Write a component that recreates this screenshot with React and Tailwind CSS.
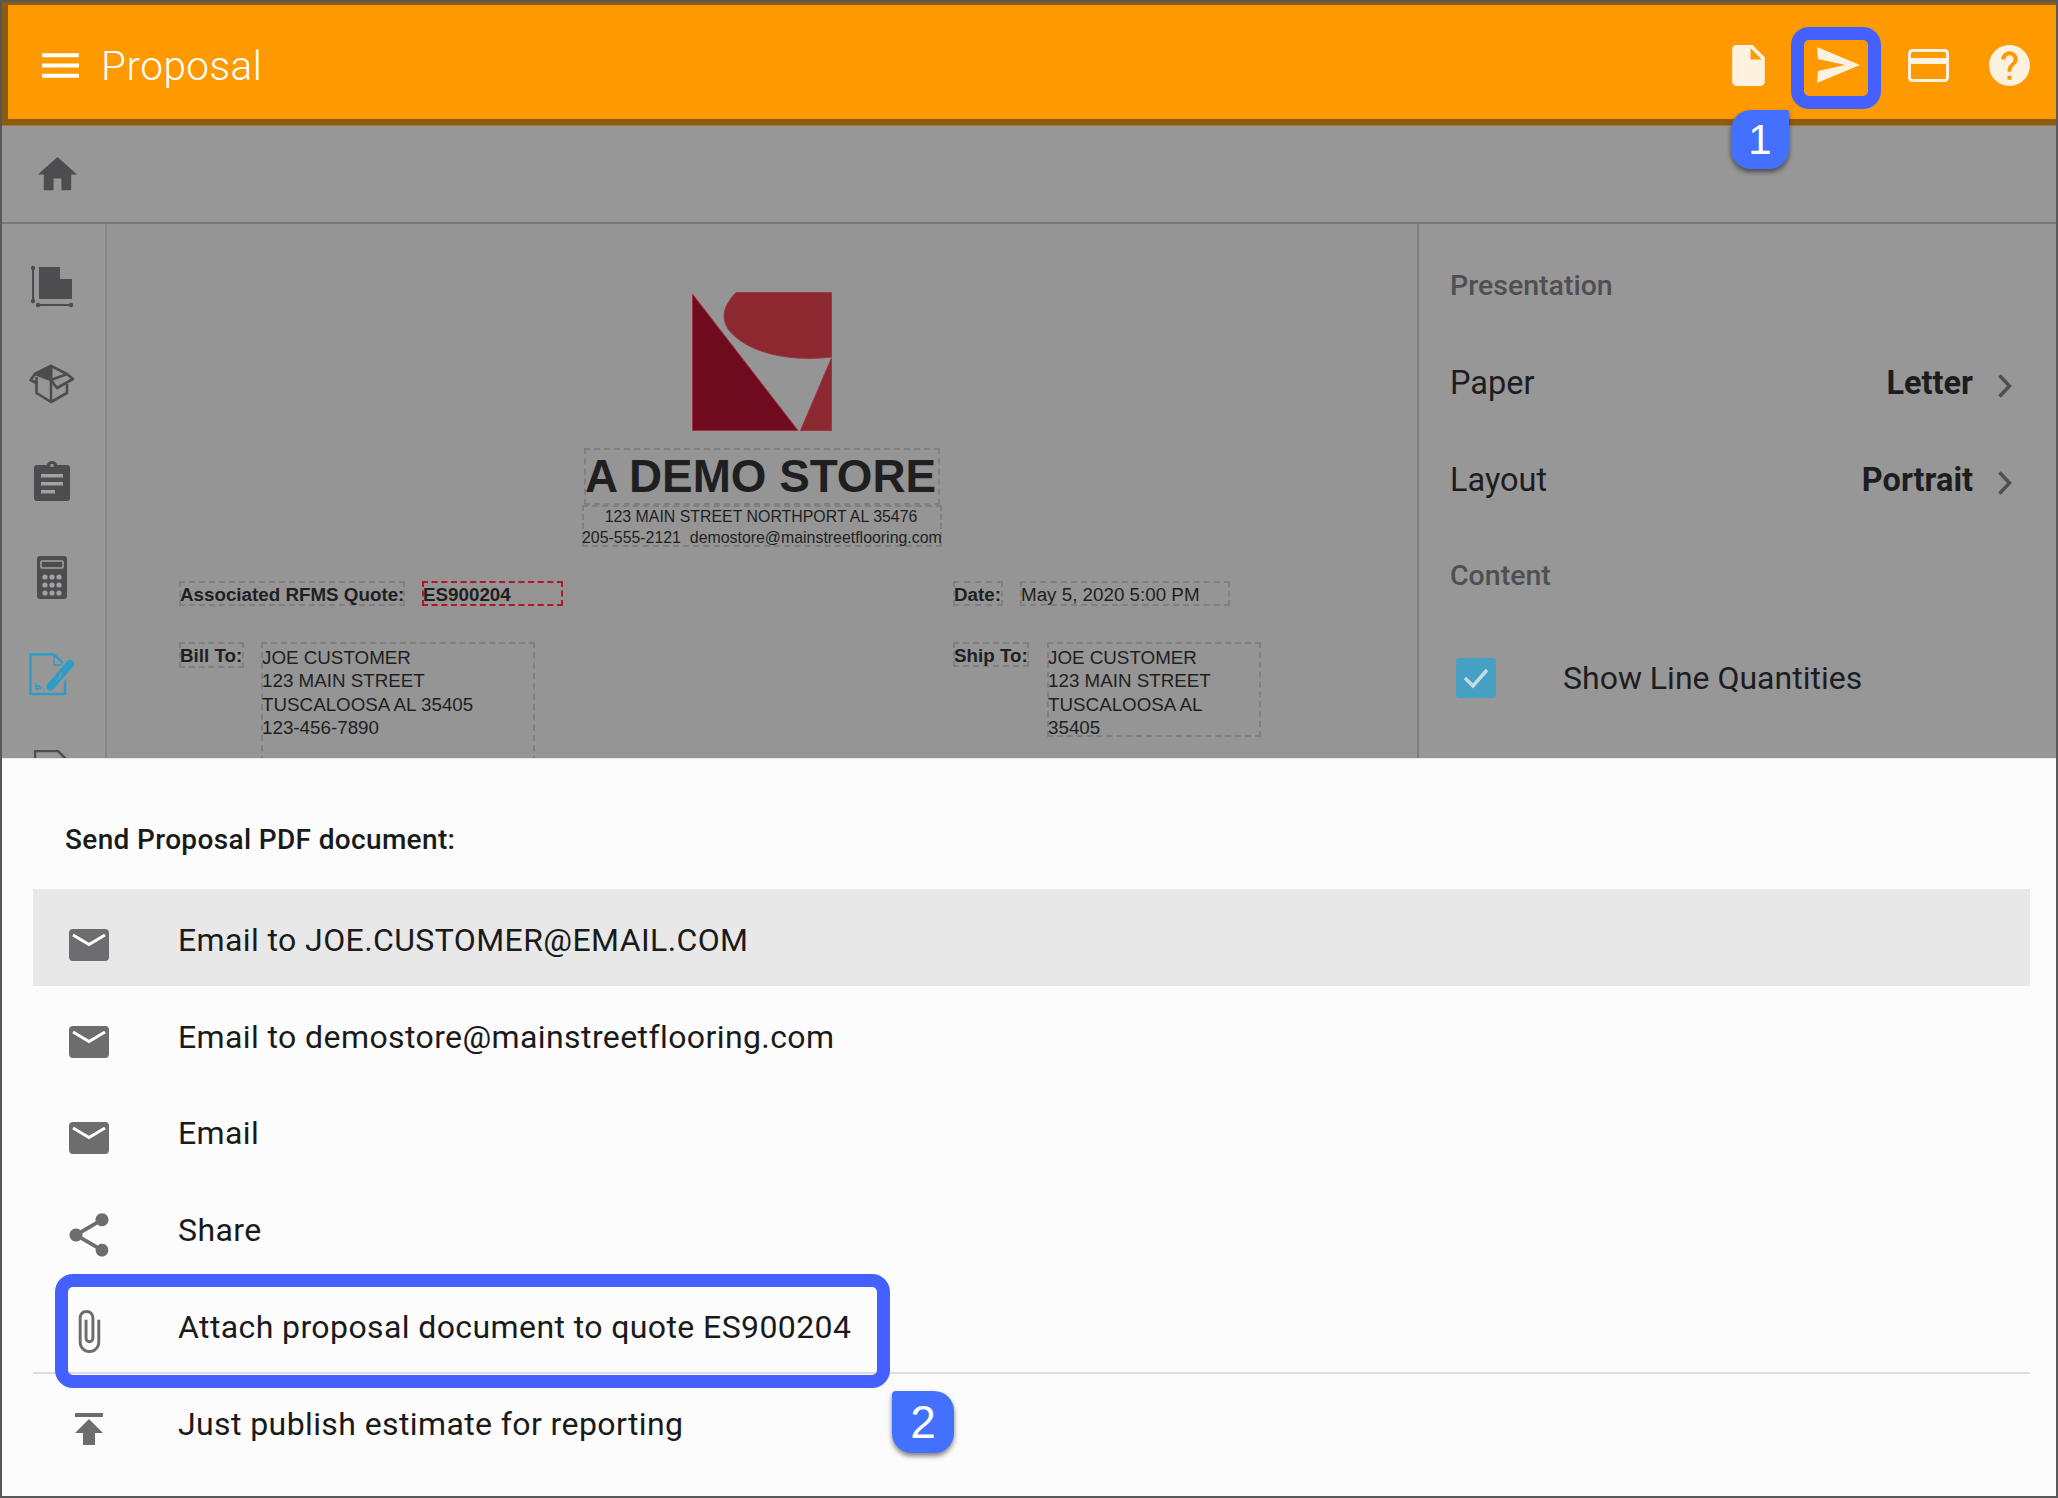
import { MdMenu, MdInsertDriveFile, MdHelp, MdHome, MdShare, MdAttachFile, MdPublish } from 'react-icons/md';

function SendIcon() {
  return (
    <svg width="43" height="36" viewBox="0 0 43 36" className="text-[#fdf1e0]">
      <polygon points="0,0 43,18 0,36 1,24 28,18 1,12" fill="currentColor" />
    </svg>
  );
}

function CardIcon() {
  return (
    <svg width="41" height="33" viewBox="0 0 41 33" className="text-[#fdf1e0]">
      <rect x="1.500" y="1.500" width="38" height="30" rx="3" fill="none" stroke="currentColor" strokeWidth="3" />
      <rect x="2" y="9" width="37" height="6" fill="currentColor" />
    </svg>
  );
}

function MailIcon() {
  return (
    <svg width="40" height="32" viewBox="0 0 40 32">
      <rect width="40" height="32" rx="4" fill="#6d6d6f" />
      <path d="M4 6 L20 15.500 L36 6" fill="none" stroke="#fff" strokeWidth="3" />
    </svg>
  );
}

function FloorIcon() {
  return (
    <svg width="44" height="44" viewBox="0 0 44 44" fill="#4d4d4f">
      <path d="M9 2 H30 V14 H42 V34 H9 Z" />
      <path d="M3 3 V36 M8 40 H41" stroke="#4d4d4f" strokeWidth="2" fill="none" />
      <circle cx="3" cy="3" r="2.200" />
      <circle cx="3" cy="36" r="2.200" />
      <circle cx="8" cy="40" r="2.200" />
      <circle cx="41" cy="40" r="2.200" />
    </svg>
  );
}

function BoxIcon() {
  return (
    <svg width="46" height="40" viewBox="0 0 46 40" fill="none" stroke="#4d4d4f" strokeWidth="2.600" strokeLinejoin="round">
      <path d="M22 2 L6 10 L1.500 16 L7.500 19 V29 L22 38 L38 29 V20" />
      <path d="M22 2 L38 10 L44 15 L28 24 L22 16 Z" />
      <path d="M22 2 L6 10 L22 16 Z" fill="#4d4d4f" />
      <path d="M22 16 V38 M7.500 13 V19 M22 16 L38 10" />
    </svg>
  );
}

function ClipboardIcon() {
  return (
    <svg width="36" height="40" viewBox="0 0 36 40">
      <path d="M3 4 H13 A5 4 0 0 1 23 4 H33 Q36 4 36 7 V37 Q36 40 33 40 H3 Q0 40 0 37 V7 Q0 4 3 4 Z" fill="#4d4d4f" />
      <rect x="16.500" y="3" width="3" height="3" fill="#979797" />
      <rect x="7" y="13" width="22" height="3.500" fill="#a2a2a2" />
      <rect x="7" y="21" width="22" height="3.500" fill="#a2a2a2" />
      <rect x="7" y="29" width="14" height="3.500" fill="#a2a2a2" />
    </svg>
  );
}

function CalculatorIcon() {
  const dots = [];
  for (const y of [21, 29, 37]) {
    for (const x of [8, 15, 22]) dots.push(<circle key={`${x}-${y}`} cx={x} cy={y} r="2.600" fill="#a2a2a2" />);
  }
  return (
    <svg width="30" height="43" viewBox="0 0 30 43">
      <rect width="30" height="43" rx="3" fill="#4d4d4f" />
      <rect x="4" y="5" width="22" height="7" rx="1" fill="none" stroke="#a2a2a2" strokeWidth="1.500" />
      {dots}
    </svg>
  );
}

function EditDocIcon() {
  return (
    <svg width="46" height="43" viewBox="0 0 46 43">
      <path d="M1.500 1.500 H25 L36 12 V41 H1.500 Z" fill="none" stroke="#2c9dc6" strokeWidth="2.400" />
      <path d="M25 2 V12 H35" fill="none" stroke="#2c9dc6" strokeWidth="1.400" />
      <path d="M22 33 L42 11" stroke="#979797" strokeWidth="13" strokeLinecap="round" />
      <path d="M21.500 33.500 L41 11" stroke="#2c9dc6" strokeWidth="8" strokeLinecap="round" />
      <path d="M29 27 L33 19" stroke="#979797" strokeWidth="1.200" />
      <path d="M7 36 V30 M7 36 H10 V33 H7 M12 36 V33 M15 36 H16" fill="none" stroke="#2c9dc6" strokeWidth="1.400" />
    </svg>
  );
}

function CutDocIcon() {
  return (
    <svg width="36" height="44" viewBox="0 0 36 44">
      <path d="M1 43 V1 H24 L35 12 V43" fill="none" stroke="#4d4d4f" strokeWidth="2.500" />
    </svg>
  );
}

function Logo() {
  return (
    <svg width="140" height="139" viewBox="0 0 140 139" className="mx-auto block">
      <path d="M0.500 2 L106 138.500 H0.500 Z" fill="#6f0b1f" stroke="#a33343" strokeWidth="1" />
      <path d="M44 0.500 H139.500 V65 C100 70 55 62 36 37 C28 24 33 12 44 0.500 Z" fill="#8b2830" stroke="#a33343" strokeWidth="1" />
      <path d="M139.500 66 V138.500 H108.500 Z" fill="#8b2830" stroke="#a33343" strokeWidth="1" />
    </svg>
  );
}

function Chevron() {
  return (
    <svg width="16" height="26" viewBox="0 0 16 26" className="ml-[24px] mt-[5px] shrink-0">
      <path d="M2.500 2.500 L12.500 13 L2.500 23.500" fill="none" stroke="#505050" strokeWidth="3.500" />
    </svg>
  );
}

const sidebarIcons = [FloorIcon, BoxIcon, ClipboardIcon, CalculatorIcon, EditDocIcon, CutDocIcon];

const sendRows = [
  { label: 'Email to JOE.CUSTOMER@EMAIL.COM', icon: <MailIcon />, active: true },
  { label: 'Email to demostore@mainstreetflooring.com', icon: <MailIcon /> },
  { label: 'Email', icon: <MailIcon /> },
  { label: 'Share', icon: <MdShare size={52} color="#6d6d6f" className="-ml-[6px]" /> },
  { label: 'Attach proposal document to quote ES900204', icon: <MdAttachFile size={47} color="#6d6d6f" className="-ml-[4px]" /> },
  { label: 'Just publish estimate for reporting', icon: <MdPublish size={48} color="#6d6d6f" className="-ml-[4px]" />, divider: true },
];

const dashed = 'border-2 border-dashed border-[#808082]';

export default function App() {
  return (
    <div className="relative w-[2058px] h-[1498px] overflow-hidden border-2 border-[#58585a] bg-[#979797] font-['Roboto',sans-serif]">
      {/* top bar */}
      <div className="h-[124px] bg-[#8e5c10] pt-[3px] pl-[6px] pb-[6px] border-b border-[#a57a3c]">
        <div className="h-full bg-[#ff9900] flex items-center pt-[6px]">
          <MdMenu size={49} color="#fff" className="ml-[28px]" />
          <span className="ml-[16px] mt-[2px] text-[40.500px] font-light text-white tracking-[0.5px]">Proposal</span>
          <div className="ml-auto flex items-center">
            <MdInsertDriveFile size={49} color="#fdf1e0" />
            <div className="ml-[44px] flex"><SendIcon /></div>
            <div className="ml-[48px] flex"><CardIcon /></div>
            <MdHelp size={49} color="#fdf1e0" className="ml-[36px] mr-[22px]" />
          </div>
        </div>
      </div>

      {/* dimmed page */}
      <div className="h-[632px] flex flex-col overflow-hidden">
        <div className="h-[98px] shrink-0 flex items-center pl-[32px] border-b-2 border-[#77777a]">
          <MdHome size={47} color="#4d4d4f" />
        </div>
        <div className="flex flex-1 min-h-0">
          <div className="w-[105px] shrink-0 pt-[14px] overflow-hidden border-r-2 border-[#868688]">
            {sidebarIcons.map((Icon, i) => (
              <div key={i} className="h-[97px] flex items-center justify-center pr-[3px]">
                <Icon />
              </div>
            ))}
          </div>

          <div className="flex-1 min-w-0 pt-[68px] bg-[#959595] font-['Liberation_Sans',sans-serif] text-[#1f1f21]">
            <Logo />
            <div className={`mx-auto mt-[17px] w-[356px] h-[57px] flex items-center justify-center ${dashed} text-[45.800px] font-bold leading-none whitespace-nowrap`}>
              <span className="-ml-[3px]">A DEMO STORE</span>
            </div>
            <div className={`mx-auto w-[360px] h-[42px] ${dashed} text-[15.900px] leading-[20.500px] text-center whitespace-nowrap`}>
              <div className="-ml-[2px]">123 MAIN STREET NORTHPORT AL 35476</div>
              <div className="-ml-[2px]">205-555-2121&nbsp; demostore@mainstreetflooring.com</div>
            </div>

            <div className="mt-[34px] grid grid-cols-[774px_1fr] pl-[72px]">
              <div>
                <div className="flex">
                  <div className={`w-[226px] h-[25px] ${dashed} text-[18.800px] font-bold leading-[24px] whitespace-nowrap`}><div className="-ml-[1px]">Associated RFMS Quote:</div></div>
                  <div className="ml-[17px] w-[141px] h-[25px] border-2 border-dashed border-[#b3152c] text-[18.800px] font-bold leading-[24px]"><div className="-ml-[1px]">ES900204</div></div>
                </div>
                <div className="flex mt-[36px]">
                  <div className={`w-[65px] h-[26px] ${dashed} text-[18.800px] font-bold leading-[24px] whitespace-nowrap`}><div className="-ml-[1px]">Bill To:</div></div>
                  <div className={`ml-[17px] w-[274px] h-[130px] ${dashed} text-[18.800px] leading-[23.300px] pt-[2px] whitespace-nowrap`}>
                    <div className="-ml-[1px]">JOE CUSTOMER<br />123 MAIN STREET<br />TUSCALOOSA AL 35405<br />123-456-7890</div>
                  </div>
                </div>
              </div>
              <div>
                <div className="flex">
                  <div className={`w-[50px] h-[25px] ${dashed} text-[18.800px] font-bold leading-[24px]`}><div className="-ml-[1px]">Date:</div></div>
                  <div className={`ml-[17px] w-[210px] h-[25px] ${dashed} text-[18.800px] leading-[24px] whitespace-nowrap`}><div className="-ml-[1px]">May 5, 2020 5:00 PM</div></div>
                </div>
                <div className="flex mt-[36px]">
                  <div className={`w-[76px] h-[25px] ${dashed} text-[18.800px] font-bold leading-[24px] whitespace-nowrap`}><div className="-ml-[1px]">Ship To:</div></div>
                  <div className={`ml-[18px] w-[214px] h-[95px] ${dashed} text-[18.800px] leading-[23.300px] pt-[2px]`}>
                    <div className="-ml-[1px]">JOE CUSTOMER<br />123 MAIN STREET<br />TUSCALOOSA AL<br />35405</div>
                  </div>
                </div>
              </div>
            </div>
          </div>

          <div className="w-[639px] shrink-0 pt-[14px] pl-[31px] border-l-2 border-[#7f7f81] text-[#1d1d1f]">
            <div className="h-[97px] flex items-center text-[28.500px] font-medium text-[#4f4f51]">Presentation</div>
            <div className="h-[97px] flex items-center text-[32.500px]">
              <span>Paper</span>
              <span className="ml-auto font-bold">Letter</span>
              <Chevron />
              <span className="w-[43px]" />
            </div>
            <div className="h-[97px] flex items-center text-[32.500px]">
              <span>Layout</span>
              <span className="ml-auto font-bold">Portrait</span>
              <Chevron />
              <span className="w-[43px]" />
            </div>
            <div className="h-[97px] -mt-[1px] flex items-center text-[28.500px] font-medium text-[#4f4f51]">Content</div>
            <div className="h-[97px] mt-[4px] flex items-center text-[32px]">
              <div className="ml-[6px] w-[40px] h-[40px] rounded-[3px] bg-[#45a0c4] flex items-center justify-center">
                <svg width="28" height="24" viewBox="0 0 28 24">
                  <path d="M3 12 L11 20 L25 4" fill="none" stroke="#c3dbe4" strokeWidth="3.500" />
                </svg>
              </div>
              <span className="ml-[67px]">Show Line Quantities</span>
            </div>
          </div>
        </div>
      </div>

      {/* send sheet */}
      <div className="h-[738px] bg-[#fcfcfc] border-t border-[#e6e6e6]">
        <div className="h-[130px] pt-[63px] pl-[63px] text-[28px] font-medium leading-[36px] tracking-[0.350px] text-[#1a1a1a]">Send Proposal PDF document:</div>
        <div className="ml-[31px] mr-[26px]">
          {sendRows.map((row) => (
            <div
              key={row.label}
              className={`h-[96.600px] flex items-center pt-[6px] ${row.active ? 'bg-[#e8e8e8]' : ''} ${row.divider ? 'border-t-2 border-[#dddddd]' : ''}`}
            >
              <div className="w-[145px] shrink-0 pl-[36px] pt-[10px] flex items-center">{row.icon}</div>
              <span className="text-[32px] text-[#1a1a1a] tracking-[0.400px] whitespace-nowrap">{row.label}</span>
            </div>
          ))}
        </div>
      </div>

      {/* callouts */}
      <div className="absolute left-[1789px] top-[25px] w-[90px] h-[82px] rounded-[18px] border-[13px] border-[#4460ff]" />
      <div className="absolute left-[1729px] top-[108px] w-[58px] h-[59px] rounded-[20px] rounded-tr-[2px] bg-[#4370ff] shadow-[0_3px_5px_rgba(0,0,0,0.5)] flex items-center justify-center text-[42px] font-light text-white font-['Liberation_Sans',sans-serif]">1</div>
      <div className="absolute left-[53px] top-[1272px] w-[835px] h-[114px] rounded-[18px] border-[13px] border-[#4460ff]" />
      <div className="absolute left-[890px] top-[1389px] w-[62px] h-[62px] rounded-[20px] rounded-tl-[4px] bg-[#4370ff] shadow-[0_3px_5px_rgba(0,0,0,0.5)] flex items-center justify-center text-[46px] text-white font-['Liberation_Sans',sans-serif]">2</div>
    </div>
  );
}
